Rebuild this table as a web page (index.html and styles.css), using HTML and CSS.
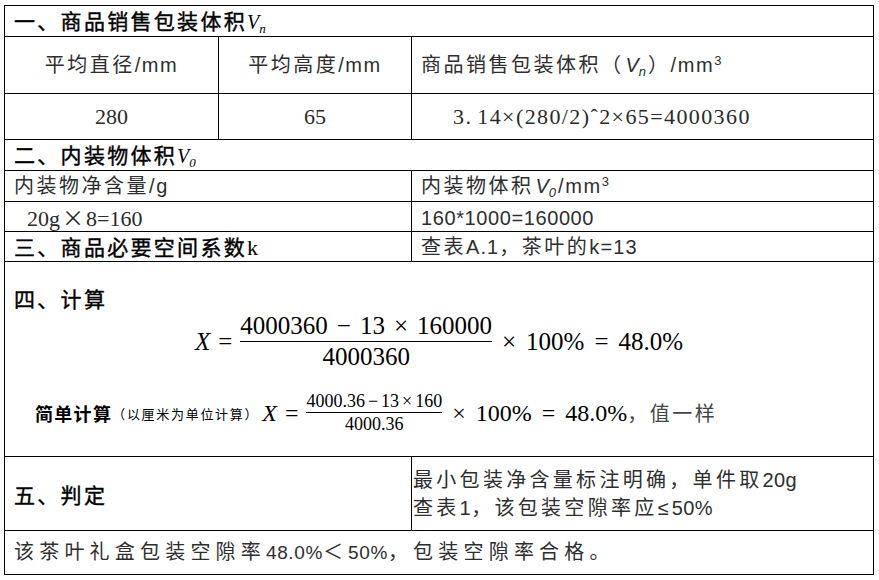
FILE: index.html
```html
<!DOCTYPE html>
<html lang="zh-CN">
<head>
<meta charset="utf-8">
<title>商品包装空隙率计算</title>
<link rel="stylesheet" href="styles.css">
</head>
<body>
<div class="sheet">
  <div class="row h31">
    <div class="cell span3 title">一、商品销售包装体积<span class="var">V<sub>n</sub></span></div>
  </div>
  <div class="row h57">
    <div class="cell body center">平均直径<span class="lat">/mm</span></div>
    <div class="cell body center">平均高度<span class="lat">/mm</span></div>
    <div class="cell body">商品销售包装体积（<span class="ivar">V<sub>n</sub></span>）<span class="lat">/mm<sup>3</sup></span></div>
  </div>
  <div class="row h46">
    <div class="cell num center">280</div>
    <div class="cell num center">65</div>
    <div class="cell num calc">3<span class="dot">.</span>14×(280/2)ˆ2×65=4000360</div>
  </div>
  <div class="row h31">
    <div class="cell span3 title">二、内装物体积<span class="var">V<sub>0</sub></span></div>
  </div>
  <div class="row two h31">
    <div class="cell body">内装物净含量<span class="lat">/g</span></div>
    <div class="cell body">内装物体积<span class="ivar">V<sub>0</sub></span><span class="lat">/mm<sup>3</sup></span></div>
  </div>
  <div class="row two h30">
    <div class="cell num lead">20g<span class="times">×</span>8=160</div>
    <div class="cell body"><span class="lat tight">160*1000=160000</span></div>
  </div>
  <div class="row two h30">
    <div class="cell title">三、商品必要空间系数<span class="serif-k">k</span></div>
    <div class="cell body">查表<span class="lat wide">A.1</span>，茶叶的<span class="lat wide">k=13</span></div>
  </div>
  <div class="row h195">
    <div class="cell span3 calc-cell">
      <div class="title h4">四、计算</div>
      <div class="eq eq-main">
        <span class="mi">X</span><span class="mo">=</span>
        <span class="frac">
          <span class="fn">4000360<span class="op-in">−</span>13<span class="op-in">×</span>160000</span>
          <span class="fd">4000360</span>
        </span>
        <span class="op">×</span><span>100%</span><span class="op">=</span><span>48.0%</span>
      </div>
      <div class="eq eq-simple">
        <span class="simple-label">简单计算</span><span class="simple-note">（以厘米为单位计算）</span>
        <span class="mi">X</span><span class="mo">=</span>
        <span class="frac small">
          <span class="fn">4000.36<span class="op-sm">−</span>13<span class="op-sm">×</span>160</span>
          <span class="fd">4000.36</span>
        </span>
        <span class="op">×</span><span>100%</span><span class="op">=</span><span>48.0%</span><span class="cn">，值一样</span>
      </div>
    </div>
  </div>
  <div class="row two h74">
    <div class="cell title">五、判定</div>
    <div class="cell body judge">
      <div>最小包装净含量标注明确，单件取<span class="lat">20g</span></div>
      <div>查表<span class="lat">1</span>，该包装空隙率应≤<span class="lat">50%</span></div>
    </div>
  </div>
  <div class="row h44 last-row">
    <div class="cell span3 body last">该茶叶礼盒包装空隙率<span class="lat">48.0%</span>＜<span class="lat">50%</span>，包装空隙率合格。</div>
  </div>
</div>
</body>
</html>
```

FILE: styles.css
```css
html, body {
  margin: 0;
  padding: 0;
  background: #ffffff;
}

.sheet {
  box-sizing: border-box;
  width: 870px;
  margin: 5px 0 0 4px;
  border: 1px solid #000;
}

.row {
  box-sizing: border-box;
  display: grid;
  grid-template-columns: 214px 193px 1fr;
  border-bottom: 1px solid #000;
}

.row.two {
  grid-template-columns: 407px 1fr;
}

.row.last-row {
  border-bottom: 0;
}

.h31 { height: 31px; }
.h30 { height: 30px; }
.h57 { height: 57px; }
.h46 { height: 46px; }
.h195 { height: 195px; }
.h74 { height: 74px; }
.h44 { height: 43px; }

.cell {
  display: block;
  align-content: center;
  padding-left: 9px;
  line-height: 28px;
  white-space: nowrap;
  border-right: 1px solid #000;
}

.cell:last-child {
  border-right: 0;
}

.span3 {
  grid-column: 1 / -1;
}

.cell.center {
  text-align: center;
  padding-left: 0;
}

/* section titles */
.title {
  font-family: "Noto Sans CJK SC", sans-serif;
  font-size: 21px;
  font-weight: 400;
  letter-spacing: 2.3px;
  color: #000;
  -webkit-text-stroke: 0.4px #000;
}

.var {
  font-family: "Liberation Serif", serif;
  font-style: italic;
  font-size: 20px;
  letter-spacing: 0;
  -webkit-text-stroke: 0;
}

.var sub {
  font-size: 13px;
  vertical-align: -4px;
  line-height: 0;
}

.serif-k {
  font-family: "Liberation Serif", serif;
  font-size: 22px;
  letter-spacing: 0;
  -webkit-text-stroke: 0;
}

/* body text */
.body {
  font-family: "Liberation Sans", "Noto Sans CJK SC", sans-serif;
  font-size: 20px;
  letter-spacing: 2.5px;
  color: #2e2e2e;
}

.lat {
  letter-spacing: 1.6px;
}

.lat.wide {
  letter-spacing: 1.1px;
}

.lat.tight {
  letter-spacing: 0.6px;
}

.lat sup {
  font-size: 13px;
  vertical-align: 7px;
  line-height: 0;
}

.ivar {
  font-style: italic;
  letter-spacing: 0;
  margin-left: 2px;
}

.ivar sub {
  font-size: 13px;
  vertical-align: -4px;
  line-height: 0;
  margin-right: 2px;
}

/* numbers */
.num {
  font-family: "Liberation Serif", serif;
  font-size: 22px;
  color: #2a2a2a;
}

.cell.calc {
  padding-left: 41px;
  letter-spacing: 1.4px;
}

.dot {
  margin-right: 5px;
}

.cell.lead {
  padding-left: 22px;
}

.times {
  font-family: "Noto Sans CJK SC", sans-serif;
  margin: 0 2px;
}

/* calculation */
.cell.calc-cell {
  align-content: start;
  padding: 0;
}

.h4 {
  margin: 24px 0 0 9px;
  line-height: 24px;
}

.eq {
  display: flex;
  align-items: center;
  font-family: "Liberation Serif", serif;
  font-size: 25px;
  color: #000;
  line-height: 1;
}

.eq-main {
  justify-content: center;
}

.mi {
  font-style: italic;
}

.mo {
  margin: 0 8px;
}

.frac {
  display: inline-flex;
  flex-direction: column;
  align-items: stretch;
  text-align: center;
}

.frac .fn {
  line-height: 31px;
  border-bottom: 1.5px solid #000;
}

.frac .fd {
  line-height: 30px;
}

.op-in {
  margin: 0 9px;
}

.op {
  margin: 0 10px;
}

.eq-simple {
  margin-top: 19px;
  padding-left: 30px;
  font-size: 24px;
}

.simple-label {
  font-family: "Noto Sans CJK SC", sans-serif;
  font-size: 18px;
  letter-spacing: 1.3px;
  font-weight: 700;
}

.simple-note {
  font-family: "Noto Sans CJK SC", sans-serif;
  font-size: 13px;
  letter-spacing: 1.7px;
  margin-right: 3px;
}

.frac.small {
  font-size: 18px;
}

.frac.small .fn {
  line-height: 21px;
}

.frac.small .fd {
  line-height: 22px;
}

.op-sm {
  margin: 0 3px;
}

.cn {
  font-family: "Noto Sans CJK SC", sans-serif;
  font-size: 20px;
  letter-spacing: 2.5px;
  color: #444;
}

/* judgement */
.cell.judge {
  padding-left: 1px;
  letter-spacing: 3.3px;
}

.judge .lat {
  letter-spacing: 0.4px;
}

.cell.last {
  letter-spacing: 5.2px;
}

.last .lat {
  font-size: 19px;
  letter-spacing: 0.6px;
}
```
